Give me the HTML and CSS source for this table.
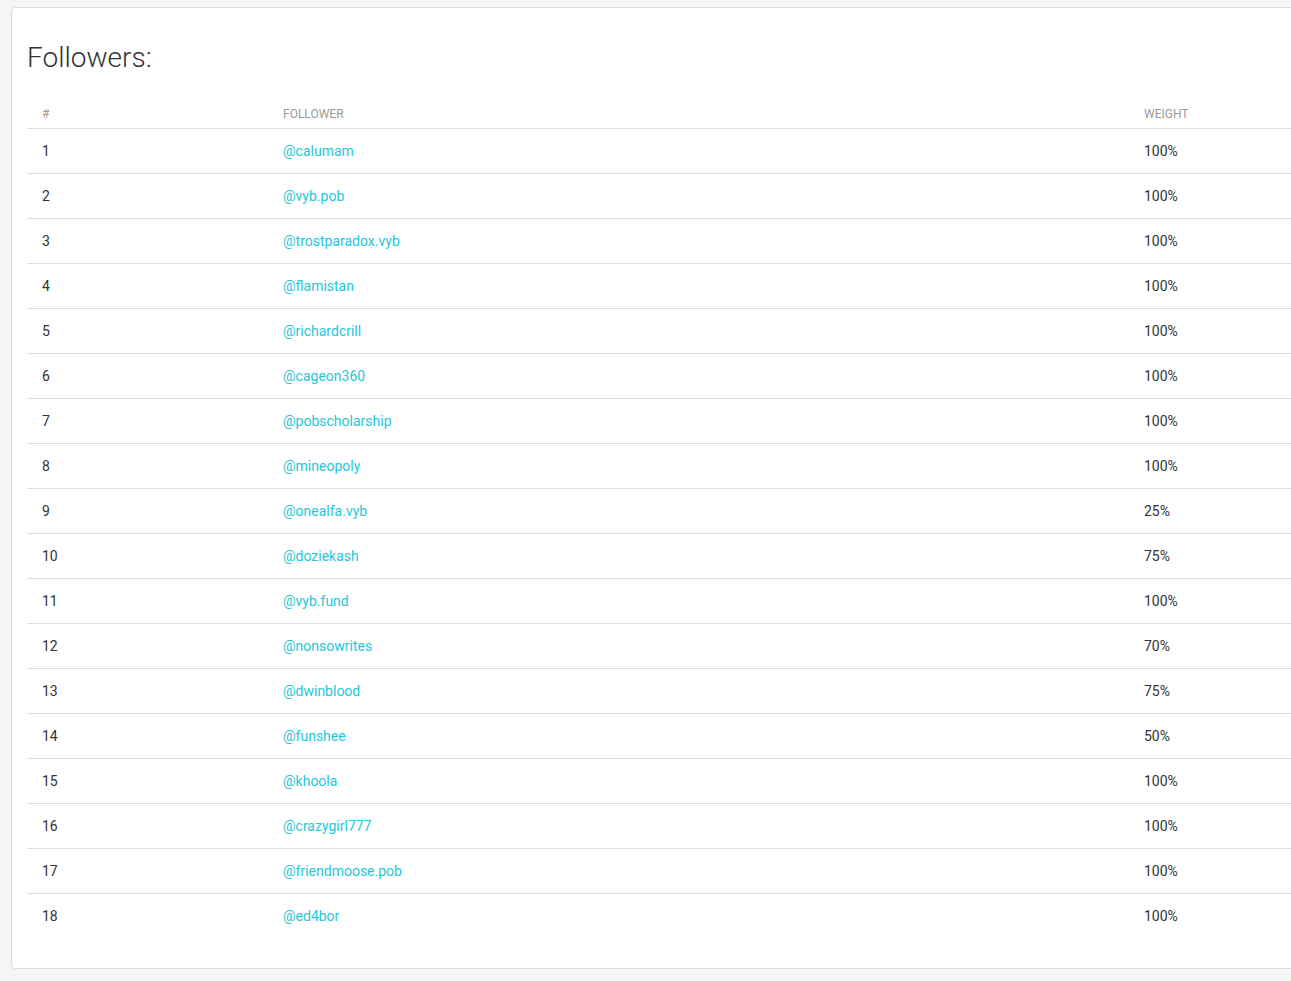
FILE: index.html
```html
<!DOCTYPE html>
<html lang="en">
<head>
  <meta charset="UTF-8">
  <meta name="viewport" content="width=device-width, initial-scale=1.0">
  <title>Followers</title>
  <link rel="stylesheet" href="styles.css">
</head>
<body>
  <div class="card">
    <h3 class="card-title">Followers:</h3>
    <table class="followers">
      <thead>
        <tr>
          <th class="col-num">#</th>
          <th class="col-name">Follower</th>
          <th class="col-weight">Weight</th>
        </tr>
      </thead>
      <tbody>
        <tr><td>1</td><td><a href="#">@calumam</a></td><td>100%</td></tr>
        <tr><td>2</td><td><a href="#">@vyb.pob</a></td><td>100%</td></tr>
        <tr><td>3</td><td><a href="#">@trostparadox.vyb</a></td><td>100%</td></tr>
        <tr><td>4</td><td><a href="#">@flamistan</a></td><td>100%</td></tr>
        <tr><td>5</td><td><a href="#">@richardcrill</a></td><td>100%</td></tr>
        <tr><td>6</td><td><a href="#">@cageon360</a></td><td>100%</td></tr>
        <tr><td>7</td><td><a href="#">@pobscholarship</a></td><td>100%</td></tr>
        <tr><td>8</td><td><a href="#">@mineopoly</a></td><td>100%</td></tr>
        <tr><td>9</td><td><a href="#">@onealfa.vyb</a></td><td>25%</td></tr>
        <tr><td>10</td><td><a href="#">@doziekash</a></td><td>75%</td></tr>
        <tr><td>11</td><td><a href="#">@vyb.fund</a></td><td>100%</td></tr>
        <tr><td>12</td><td><a href="#">@nonsowrites</a></td><td>70%</td></tr>
        <tr><td>13</td><td><a href="#">@dwinblood</a></td><td>75%</td></tr>
        <tr><td>14</td><td><a href="#">@funshee</a></td><td>50%</td></tr>
        <tr><td>15</td><td><a href="#">@khoola</a></td><td>100%</td></tr>
        <tr><td>16</td><td><a href="#">@crazygirl777</a></td><td>100%</td></tr>
        <tr><td>17</td><td><a href="#">@friendmoose.pob</a></td><td>100%</td></tr>
        <tr><td>18</td><td><a href="#">@ed4bor</a></td><td>100%</td></tr>
      </tbody>
    </table>
  </div>
</body>
</html>
```

FILE: styles.css
```css
body {
  font-family: Roboto, 'Liberation Sans', sans-serif;
  background-color: #f5f5f5;
  margin: 0;
  padding: 7px 0 0 11px;
  color: #333;
  overflow: hidden;
}
.card {
  width: 1334px;
  box-sizing: border-box;
  background-color: #fff;
  border: 1px solid #ddd;
  border-radius: 4px;
  padding: 0 15px 30px;
}
.card-title {
  margin: 0;
  padding: 33px 0 25px;
  font-size: 28px;
  font-weight: 300;
  line-height: 34px;
  color: #333;
}
.followers {
  width: 1302px;
  border-collapse: collapse;
  font-size: 14px;
}
.followers th {
  text-align: left;
  font-size: 12px;
  font-weight: 400;
  text-transform: uppercase;
  color: #9a9a9a;
  height: 28px;
  padding: 0 15px;
  border-bottom: 1px solid #ddd;
  vertical-align: middle;
}
.col-num { width: 211px; }
.col-name { width: 831px; }
.followers td {
  height: 44px;
  padding: 0 15px;
  border-bottom: 1px solid #ddd;
  color: #333;
  vertical-align: middle;
}
.followers tbody tr:last-child td {
  border-bottom: none;
}
.followers a {
  color: #26c6da;
  text-decoration: none;
}
```
